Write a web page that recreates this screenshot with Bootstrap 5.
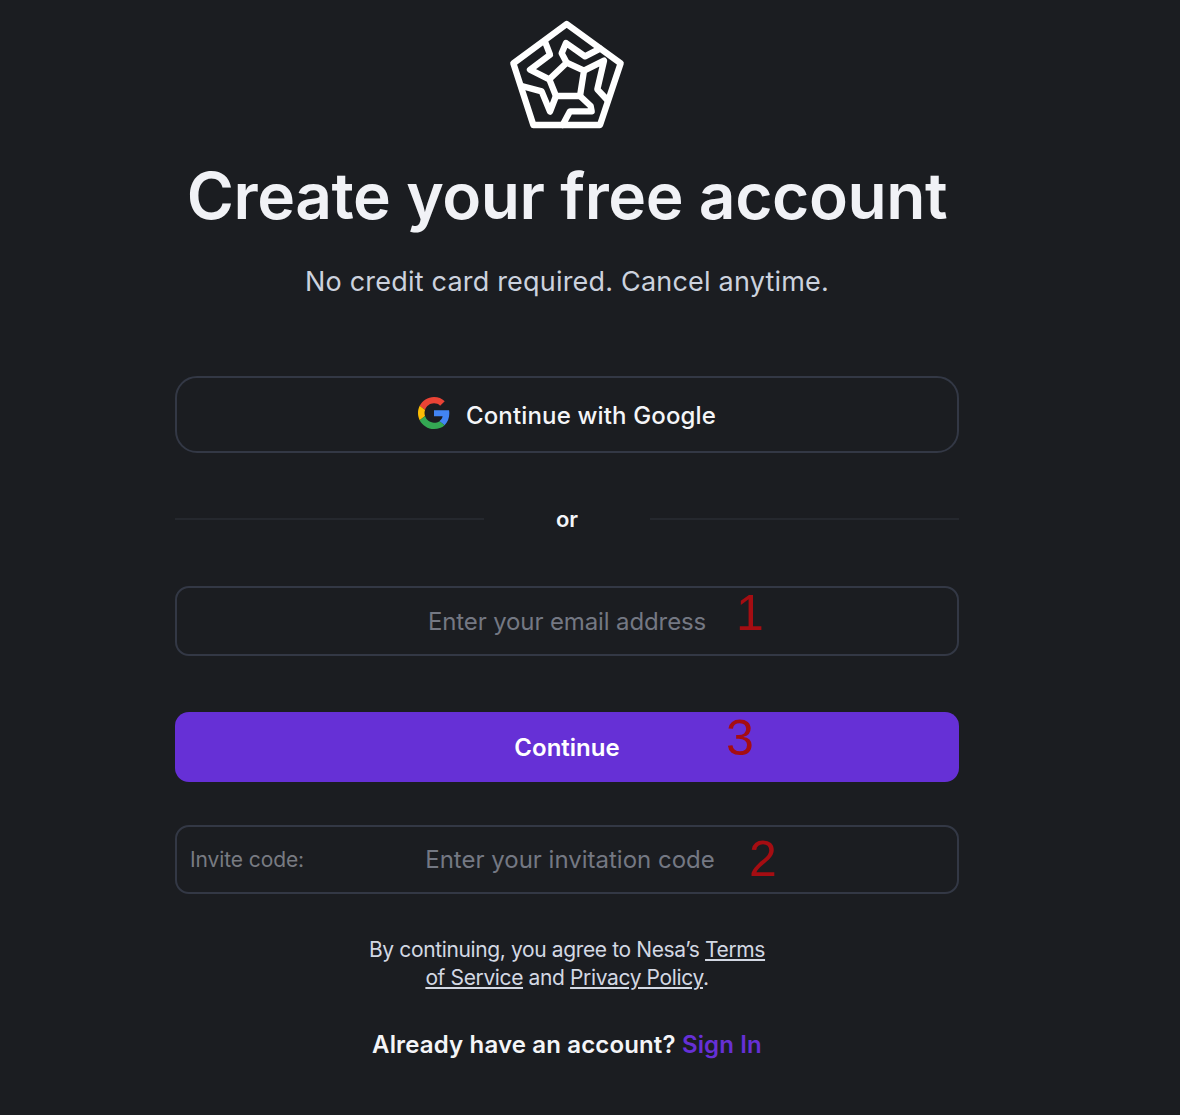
<!DOCTYPE html>
<html lang="en">
<head>
<meta charset="utf-8">
<title>Create your free account</title>
<link href="https://cdn.jsdelivr.net/npm/bootstrap@5.3.0/dist/css/bootstrap.min.css" rel="stylesheet">
<style>
html,body{height:1115px;overflow:hidden}
body{background:#1b1d21;font-family:"Inter","Noto Sans",sans-serif;color:#f4f5f8}
.signup-col{width:784px;margin-left:175px}
.brand-logo{width:150px;height:130px;margin-top:10px;display:block}
.signup-title{font-size:64px;line-height:74px;font-weight:600;margin:19px 0 0;color:#f1f2f6;letter-spacing:-.42px;white-space:nowrap}
.signup-sub{font-size:27px;line-height:34px;color:#ccd2de;margin:32px 0 0;letter-spacing:.2px}
.google-btn{height:77px;margin-top:77px;padding-top:8px;border:2px solid #333845;border-radius:22px;background:transparent;color:#f4f5f8;font-size:24px;font-weight:500;letter-spacing:.15px;gap:16px}
.google-btn svg{margin-top:-6px}
.google-btn:hover{background:transparent;color:#f4f5f8;border-color:#333845}
.or-row{margin-top:52px;height:28px}
.or-line{height:2px;background:#25282e;flex:1}
.or-word{width:166px;text-align:center;font-size:22px;font-weight:600;line-height:28px}
.field-box{height:69px;border:2px solid #333845;border-radius:14px;background:transparent;color:#f4f5f8;font-size:24px;text-align:center;box-shadow:none}
.field-box:focus{background:transparent;color:#f4f5f8;border-color:#333845;box-shadow:none}
.field-box::placeholder{color:#747883;opacity:1}
.email-field{margin-top:53px;letter-spacing:-.12px;height:70px}
.go-btn{height:70px;margin-top:56px;background:#6630d6;border:0;border-radius:14px;color:#fff;font-size:24px;font-weight:600;letter-spacing:0;padding-bottom:4px}
.go-btn:hover{background:#6630d6;color:#fff}
.invite-field{margin-top:43px}
.invite-field .field-box{padding-left:18px}
.invite-tag{left:15px;top:0;height:69px;font-size:21px;color:#787b82;letter-spacing:-.1px}
.legal{font-size:21px;line-height:28px;color:#d3d8e3;margin:42px 0 0;letter-spacing:-.37px}
.legal a{color:#d3d8e3}
.have-account{font-size:24px;line-height:32px;font-weight:600;margin:37px 0 0;letter-spacing:.15px}
.have-account a{color:#6630d6;text-decoration:none}
.red-note{font-size:50px;line-height:50px;color:#a50d12;font-family:"Liberation Sans",sans-serif}
.note-1{left:736px;top:588px}
.note-2{left:749px;top:834px}
.note-3{left:726px;top:713px}
</style>
</head>
<body class="position-relative">
<main class="signup-col d-flex flex-column align-items-stretch text-center">
  <svg class="brand-logo align-self-center" viewBox="6 0 450 390" fill="none" stroke="#fff" stroke-width="19" stroke-linejoin="round" stroke-linecap="round" aria-label="Logo">
    <path d="M230 42 392 160 330 345H130L70 160Z"/>
    <path d="M165 95 180 134 120 179 178 208 230 158 282 182 270 258H198L178 208"/>
    <path d="M230 158 215 130 228 99 285 139 330 116"/>
    <path d="M282 182 342 152 322 238 352 270"/>
    <path d="M270 258 302 288 305 304H240L218 345"/>
    <path d="M198 258 180 305 155 244 95 228"/>
  </svg>
  <h1 class="signup-title">Create your free account</h1>
  <p class="signup-sub">No credit card required. Cancel anytime.</p>
  <button type="button" class="btn google-btn d-flex align-items-center justify-content-center w-100">
    <svg width="32" height="32" viewBox="0 0 48 48" aria-hidden="true"><path fill="#EA4335" d="M24 9.500c3.500 0 6.700 1.200 9.200 3.600l6.900-6.900C35.900 2.400 30.500 0 24 0 14.600 0 6.500 5.400 2.600 13.200l8 6.200C12.400 13.700 17.700 9.500 24 9.500z"/><path fill="#4285F4" d="M46.980 24.550c0-1.570-.15-3.090-.38-4.550H24v9.020h12.940c-.58 2.960-2.260 5.480-4.780 7.180l7.730 6c4.510-4.180 7.090-10.360 7.090-17.650z"/><path fill="#FBBC05" d="M10.530 28.590c-.48-1.450-.76-2.990-.76-4.590s.27-3.140.76-4.590l-7.980-6.190C.92 16.460 0 20.120 0 24c0 3.880.92 7.540 2.560 10.780l7.970-6.190z"/><path fill="#34A853" d="M24 48c6.480 0 11.930-2.130 15.890-5.810l-7.730-6c-2.150 1.450-4.920 2.300-8.160 2.300-6.260 0-11.570-4.220-13.470-9.910l-7.980 6.190C6.510 42.620 14.620 48 24 48z"/></svg>
    <span>Continue with Google</span>
  </button>
  <div class="or-row d-flex align-items-center">
    <div class="or-line"></div>
    <div class="or-word">or</div>
    <div class="or-line"></div>
  </div>
  <input type="email" class="form-control field-box email-field" placeholder="Enter your email address">
  <button type="button" class="btn go-btn w-100">Continue</button>
  <div class="invite-field position-relative">
    <input type="text" class="form-control field-box" placeholder="Enter your invitation code">
    <span class="invite-tag position-absolute d-flex align-items-center">Invite code:</span>
  </div>
  <p class="legal">By continuing, you agree to Nesa’s <a href="#">Terms</a><br><a href="#">of Service</a> and <a href="#">Privacy Policy</a>.</p>
  <p class="have-account">Already have an account? <a href="#">Sign In</a></p>
</main>
<span class="red-note note-1 position-absolute">1</span>
<span class="red-note note-2 position-absolute">2</span>
<span class="red-note note-3 position-absolute">3</span>
<script src="https://cdn.jsdelivr.net/npm/bootstrap@5.3.0/dist/js/bootstrap.bundle.min.js"></script>
</body>
</html>
